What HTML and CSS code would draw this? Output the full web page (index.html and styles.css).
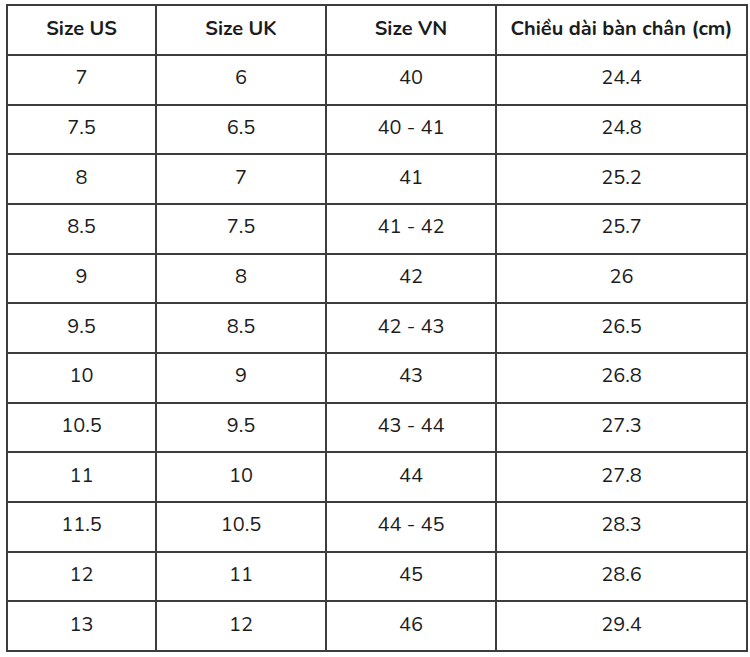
FILE: index.html
```html
<!DOCTYPE html>
<html lang="vi">
<head>
<meta charset="utf-8">
<link rel="stylesheet" href="styles.css">
</head>
<body>
<div class="wrap">
<table class="size-table">
<colgroup>
<col class="c1"><col class="c2"><col class="c3"><col class="c4">
</colgroup>
<thead>
<tr><th>Size US</th><th>Size UK</th><th>Size VN</th><th>Chiều dài bàn chân (cm)</th></tr>
</thead>
<tbody>
<tr><td>7</td><td>6</td><td>40</td><td>24.4</td></tr>
<tr><td>7.5</td><td>6.5</td><td>40 - 41</td><td>24.8</td></tr>
<tr><td>8</td><td>7</td><td>41</td><td>25.2</td></tr>
<tr><td>8.5</td><td>7.5</td><td>41 - 42</td><td>25.7</td></tr>
<tr><td>9</td><td>8</td><td>42</td><td>26</td></tr>
<tr><td>9.5</td><td>8.5</td><td>42 - 43</td><td>26.5</td></tr>
<tr><td>10</td><td>9</td><td>43</td><td>26.8</td></tr>
<tr><td>10.5</td><td>9.5</td><td>43 - 44</td><td>27.3</td></tr>
<tr><td>11</td><td>10</td><td>44</td><td>27.8</td></tr>
<tr><td>11.5</td><td>10.5</td><td>44 - 45</td><td>28.3</td></tr>
<tr><td>12</td><td>11</td><td>45</td><td>28.6</td></tr>
<tr><td>13</td><td>12</td><td>46</td><td>29.4</td></tr>
</tbody>
</table>
</div>
</body>
</html>
```

FILE: styles.css
```css
html, body {
  margin: 0;
  padding: 0;
  background: #ffffff;
}
.wrap {
  padding: 4px 0 0 6px;
}
.size-table {
  border-collapse: collapse;
  table-layout: fixed;
  width: 740px;
  height: 648px;
  font-family: "Nunito", Lato, "Noto Sans", sans-serif;
  font-size: 20px;
  color: #1c1c1c;
}
.c1 { width: 149px; }
.c2 { width: 170px; }
.c3 { width: 170px; }
.c4 { width: 251px; }
.size-table th,
.size-table td {
  border: 2px solid #3d3d3d;
  text-align: center;
  vertical-align: middle;
  padding: 0 0 4px 0;
  height: 30px;
}
.size-table th {
  font-weight: 700;
  height: 44px;
}
.size-table td {
  font-weight: 400;
}
```
